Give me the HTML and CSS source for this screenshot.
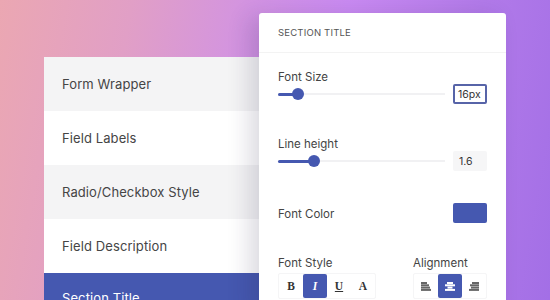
FILE: index.html
```html
<!DOCTYPE html>
<html>
<head>
<meta charset="utf-8">
<link rel="stylesheet" href="styles.css">
</head>
<body>
<div class="stage">
  <div class="menu">
    <div class="item gray">Form Wrapper</div>
    <div class="item">Field Labels</div>
    <div class="item gray">Radio/Checkbox Style</div>
    <div class="item">Field Description</div>
    <div class="item active">Section Title</div>
  </div>
  <div class="panel">
    <div class="panel-head">SECTION TITLE</div>
    <div class="panel-body">
      <div class="field">
        <div class="label">Font Size</div>
        <div class="slider-row">
          <div class="track"><div class="fill" style="width:20px"></div><div class="thumb" style="left:20px"></div></div>
          <div class="value boxed">16px</div>
        </div>
      </div>
      <div class="field">
        <div class="label">Line height</div>
        <div class="slider-row">
          <div class="track"><div class="fill" style="width:36px"></div><div class="thumb" style="left:36px"></div></div>
          <div class="value plain">1.6</div>
        </div>
      </div>
      <div class="color-row">
        <div class="label">Font Color</div>
        <div class="swatch"></div>
      </div>
      <div class="style-row">
        <div class="group-col">
          <div class="label">Font Style</div>
          <div class="btn-group">
            <div class="btn serif">B</div>
            <div class="btn serif on"><i>I</i></div>
            <div class="btn serif"><u>U</u></div>
            <div class="btn serif">A</div>
          </div>
        </div>
        <div class="group-col">
          <div class="label">Alignment</div>
          <div class="btn-group">
            <div class="btn"><svg width="10" height="9" viewBox="0 0 10 9"><rect x="0" y="0" width="6" height="2" fill="#666"/><rect x="0" y="2.3" width="8" height="2" fill="#666"/><rect x="0" y="4.6" width="9" height="2" fill="#666"/><rect x="0" y="6.9" width="10" height="2" fill="#666"/></svg></div>
            <div class="btn on"><svg width="10" height="9" viewBox="0 0 10 9"><rect x="2" y="0" width="6" height="2" fill="#fff"/><rect x="0" y="2.3" width="10" height="2" fill="#fff"/><rect x="2.5" y="4.6" width="5" height="2" fill="#fff"/><rect x="0" y="6.9" width="10" height="2" fill="#fff"/></svg></div>
            <div class="btn"><svg width="10" height="9" viewBox="0 0 10 9"><rect x="3" y="0" width="7" height="2" fill="#666"/><rect x="1" y="2.3" width="9" height="2" fill="#666"/><rect x="2" y="4.6" width="8" height="2" fill="#666"/><rect x="0" y="6.9" width="10" height="2" fill="#666"/></svg></div>
          </div>
        </div>
      </div>
    </div>
  </div>
</div>
</body>
</html>
```
FILE: styles.css
```css
html, body {
  margin: 0;
  padding: 0;
  width: 550px;
  height: 300px;
  overflow: hidden;
}
body {
  background: linear-gradient(100deg, #eba7b2 0%, #e19fc6 22%, #d293e2 42%, #c98af2 58%, #b27ae9 80%, #a36fe6 100%);
  font-family: "Inter", "DejaVu Sans", sans-serif;
}
.stage {
  display: flex;
  align-items: flex-start;
  padding-left: 44px;
  height: 300px;
}
.menu {
  margin-top: 57px;
  width: 215px;
  background: #fff;
  display: flex;
  flex-direction: column;
}
.item {
  height: 54px;
  display: flex;
  align-items: center;
  padding-left: 18px;
  font-size: 13px;
  color: #454545;
  letter-spacing: 0.1px;
}
.item.gray { background: #f4f4f5; }
.item.active {
  background: #4558b0;
  color: #fff;
  align-items: flex-start;
  padding-top: 17px;
}
.panel {
  margin-top: 13px;
  width: 247px;
  height: 300px;
  background: #fff;
  border-radius: 3px 3px 0 0;
  box-shadow: -10px 4px 22px rgba(40, 30, 70, 0.16);
  position: relative;
  z-index: 1;
}
.panel-head {
  height: 40px;
  box-sizing: border-box;
  display: flex;
  align-items: center;
  padding-left: 19px;
  font-size: 9.5px;
  color: #555;
  letter-spacing: 0.2px;
  border-bottom: 1px solid #f3f3f3;
}
.panel-body {
  padding: 17px 19px 0 19px;
  display: flex;
  flex-direction: column;
}
.label {
  font-size: 11.5px;
  line-height: 14px;
  color: #444;
}
.field {
  display: flex;
  flex-direction: column;
}
.field + .field { margin-top: 33px; }
.slider-row {
  display: flex;
  align-items: center;
  gap: 8px;
  height: 20px;
}
.track {
  flex: 1;
  height: 2px;
  background: #f1f1f3;
  position: relative;
}
.fill {
  position: absolute;
  left: 0;
  top: -0.5px;
  height: 3px;
  background: #4558b0;
  border-radius: 2px;
}
.thumb {
  position: absolute;
  top: 1px;
  width: 12px;
  height: 12px;
  margin: -6px 0 0 -6px;
  border-radius: 50%;
  background: #4558b0;
}
.value {
  width: 34px;
  height: 20px;
  box-sizing: border-box;
  display: flex;
  align-items: center;
  padding-left: 5px;
  font-size: 10.5px;
  color: #333;
  border-radius: 2px;
}
.value.boxed { border: 2px solid #5764a8; padding-left: 3px; }
.value.plain { background: #f6f6f7; padding-left: 6px; }
.color-row {
  margin-top: 32px;
  display: flex;
  align-items: center;
  justify-content: space-between;
  height: 20px;
}
.color-row .label { padding-top: 2px; }
.swatch {
  width: 34px;
  height: 20px;
  background: #4558b0;
  border-radius: 2px;
}
.style-row {
  margin-top: 33px;
  display: flex;
  justify-content: space-between;
}
.group-col {
  display: flex;
  flex-direction: column;
  gap: 3px;
}
.btn-group {
  display: flex;
  border: 1px solid #f5f5f6;
  border-radius: 2px;
}
.btn {
  width: 24px;
  height: 24px;
  display: flex;
  align-items: center;
  justify-content: center;
  color: #333;
}
.btn.on {
  background: #4558b0;
  color: #fff;
  border-radius: 2px;
}
.serif {
  font-family: "Liberation Serif", "DejaVu Serif", serif;
  font-weight: bold;
  font-size: 11.5px;
}
```
